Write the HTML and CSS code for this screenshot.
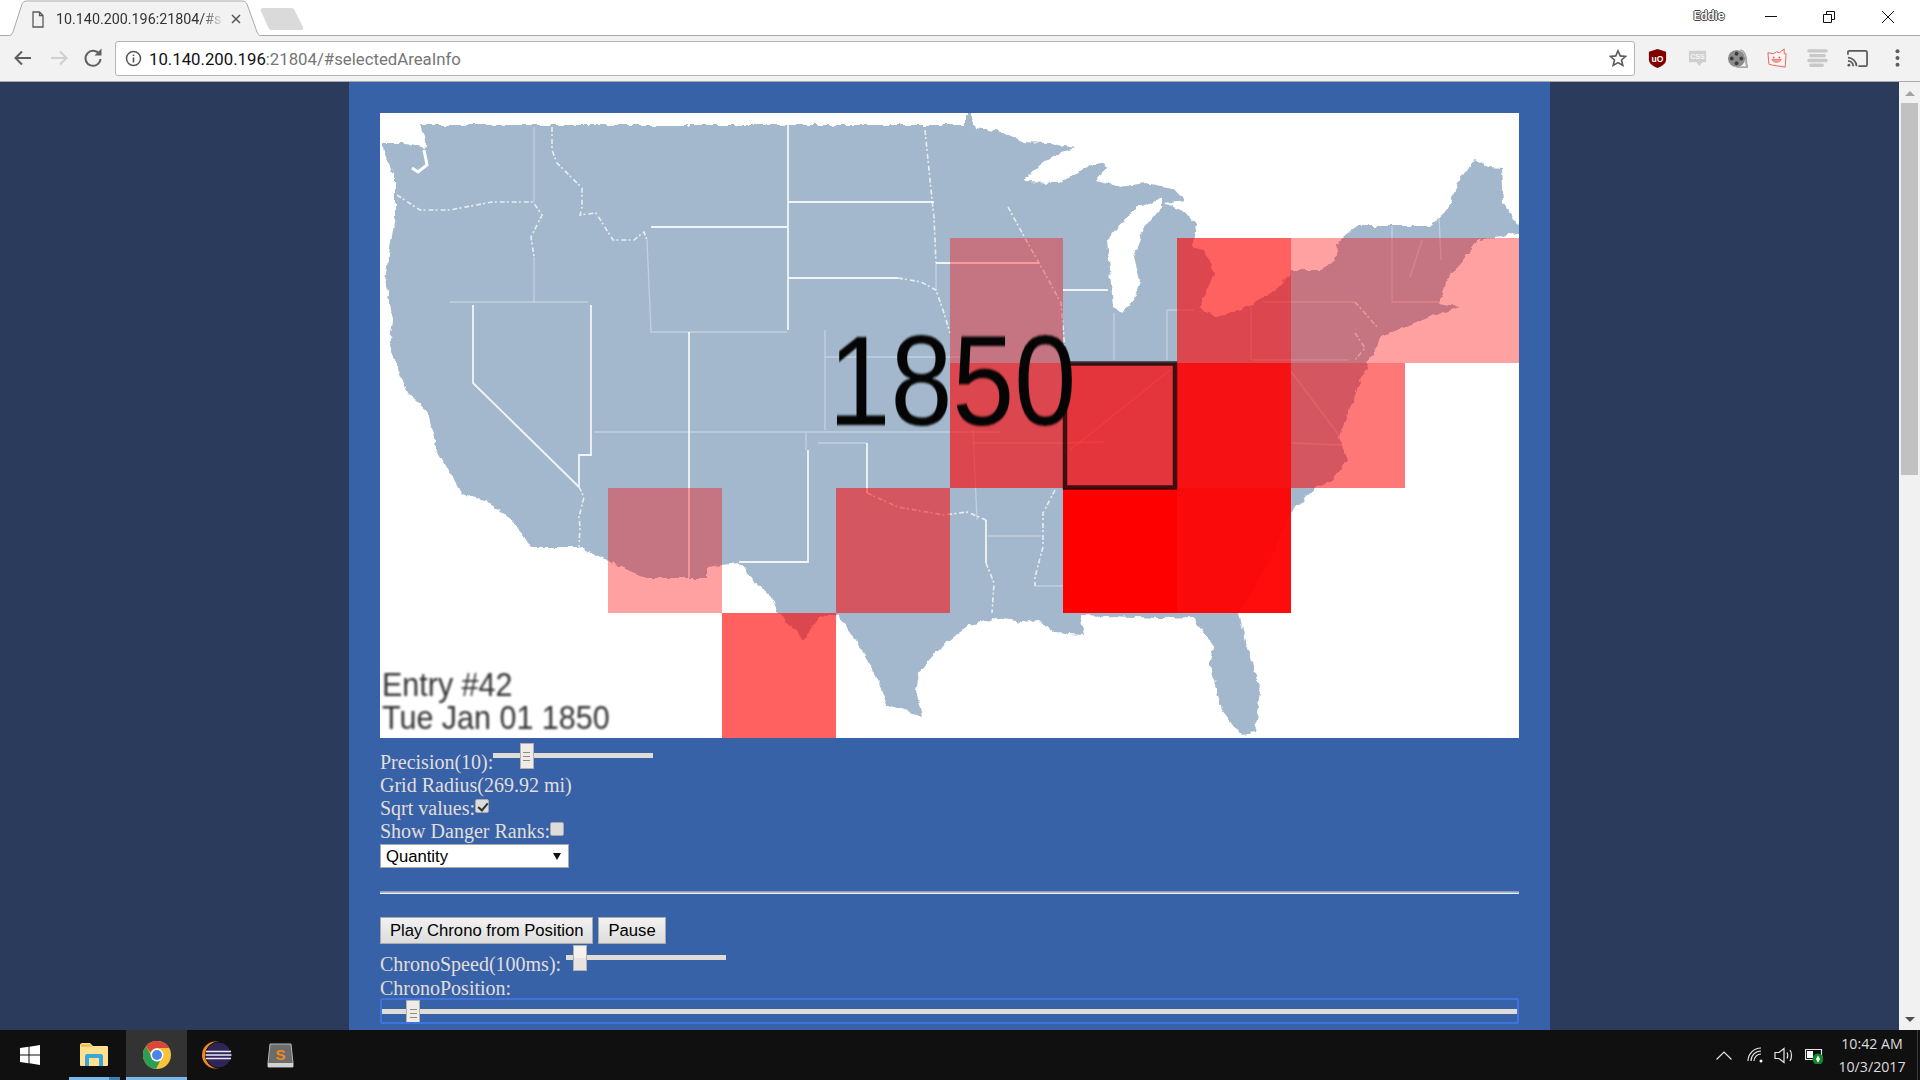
FILE: index.html
```html
<!DOCTYPE html>
<html lang="en">
<head>
<meta charset="utf-8">
<title>10.140.200.196:21804/#selectedAreaInfo</title>
<link rel="stylesheet" href="styles.css">
</head>
<body>
<div class="screen">
  <header class="browser">
    <div class="tabstrip">
      <div class="tab">
        <svg class="tab-shape" viewBox="0 0 258 36"><path class="tab-fill" d="M0 36H2C5 36 6 34 7 32L16 4C17 2 18 1 21 1H236C239 1 240 2 241 4L251 32C252 34 253 36 256 36H258"/></svg>
        <svg class="tab-file" viewBox="0 0 12 17"><path class="ico-line" d="M1 1H7.5L11 4.500V16H1ZM7.500 1V4.500H11"/></svg>
        <span class="tab-title">10.140.200.196:21804/#s</span>
        <svg class="tab-close" viewBox="0 0 10 10"><path class="ico-dark" d="M1 1L9 9M9 1L1 9"/></svg>
      </div>
      <svg class="newtab" viewBox="0 0 44 22"><path class="newtab-fill" d="M3 0H31C33 0 34 1 35 3L43 19C44 21 43 22 41 22H12C10 22 9 21 8 19L1 3C0 1 1 0 3 0Z"/></svg>
      <div class="winctl">
        <span class="user">Eddie</span>
        <svg class="win-btn win-min" viewBox="0 0 12 12"><path class="ico-thin" d="M0 5.500H12"/></svg>
        <svg class="win-btn win-max" viewBox="0 0 12 12"><path class="ico-thin" d="M.5 3.500H8.500V11.500H.5ZM3.500 3.500V.5H11.500V8.500H8.500"/></svg>
        <svg class="win-btn win-cls" viewBox="0 0 12 12"><path class="ico-thin" d="M0 0L12 12M12 0L0 12"/></svg>
      </div>
    </div>
    <div class="toolbar">
      <svg class="nav nav-back" viewBox="0 0 24 24"><path class="nav-line" d="M20 12H5M11 5.500L4.500 12L11 18.500"/></svg>
      <svg class="nav nav-fwd" viewBox="0 0 24 24"><path class="nav-off" d="M4 12H19M13 5.500L19.500 12L13 18.500"/></svg>
      <svg class="nav nav-rel" viewBox="0 0 24 24"><path class="nav-line" d="M18.500 8.500A7.500 7.500 0 1 0 19.500 13"/><path class="nav-fill" d="M13.500 9.500H20.500V2.500Z"/></svg>
      <div class="omnibox">
        <svg class="info" viewBox="0 0 17 17"><circle class="info-ring" cx="8.500" cy="8.500" r="7"/><path class="info-i" d="M8.500 7.500V12.500M8.500 4.500V6"/></svg>
        <span class="url"><b class="url-host">10.140.200.196</b>:21804/#selectedAreaInfo</span>
        <svg class="star" viewBox="0 0 18 18"><path class="star-line" d="M9 1.800L11.200 6.900L16.700 7.400L12.500 11L13.800 16.400L9 13.600L4.200 16.400L5.500 11L1.300 7.400L6.800 6.900Z"/></svg>
      </div>
      <div class="ext">
        <svg viewBox="0 0 20 22"><path class="ub" d="M10 1L19 4V12C19 16 15 19 10 21C5 19 1 16 1 12V4Z"/><text class="ub-t" x="10" y="14.500" text-anchor="middle">uO</text></svg>
      </div>
      <div class="ext">
        <svg viewBox="0 0 20 22"><path class="css-b" d="M1 3H19V15H15L12 19L9 15H1Z"/><text class="css-t" x="10" y="12" text-anchor="middle">CSS</text></svg>
      </div>
      <div class="ext">
        <svg viewBox="0 0 22 22"><circle class="reel" cx="10" cy="11" r="9"/><circle class="reel-h" cx="10" cy="6" r="2"/><circle class="reel-h" cx="10" cy="16" r="2"/><circle class="reel-h" cx="5" cy="11" r="2"/><circle class="reel-h" cx="15" cy="11" r="2"/><path class="reel-t" d="M14 2C18 3 20 8 20 13C20 17 21 19 22 20H10"/></svg>
      </div>
      <div class="ext">
        <svg viewBox="0 0 22 22"><path class="cat" d="M1 5L7 6L10 4L13 5L18 1V6L20 6L19 20L6 18L2 17Z"/><circle class="cat-e" cx="7" cy="10" r="1"/><circle class="cat-e" cx="13" cy="10" r="1"/><path class="cat-m" d="M5 12C7 16 13 16 15 12Z"/></svg>
      </div>
      <div class="ext">
        <svg viewBox="0 0 22 22"><path class="bars" d="M2 3H20M4 8H18M2 13H20M4 18H16"/></svg>
      </div>
      <div class="ext">
        <svg viewBox="0 0 22 18"><path class="cast" d="M1 5V2.500C1 1.500 1.500 1 2.500 1H19.500C20.500 1 21 1.500 21 2.500V15.500C21 16.500 20.500 17 19.500 17H12"/><path class="cast" d="M1 8C5.500 8 10 12 10 17M1 11.500C4 11.500 6.500 14 6.500 17"/><circle class="cast-d" cx="2" cy="16" r="1.500"/></svg>
      </div>
      <div class="ext">
        <svg class="menu" viewBox="0 0 4 18"><circle class="dot" cx="2" cy="3" r="1.800"/><circle class="dot" cx="2" cy="9" r="1.800"/><circle class="dot" cx="2" cy="15" r="1.800"/></svg>
      </div>
    </div>
  </header>

  <div class="viewport">
    <main class="page">
      <div class="panel">
        <svg class="map" viewBox="380 113 1139 625">
          <defs>
            <filter id="rough" x="-2%" y="-2%" width="104%" height="104%">
              <feTurbulence type="fractalNoise" baseFrequency=".14" numOctaves="2" seed="4"/>
              <feDisplacementMap in="SourceGraphic" scale="6" xChannelSelector="R" yChannelSelector="G"/>
            </filter>
          </defs>
          <rect class="sea" x="380" y="113" width="1139" height="625"/>
          <g class="soft">
            <g class="rough">
              <path class="land" d="M381 143L400 143L415 146L426 148L424 135L420 125L965 125L965 113L971 113L975 128L1002 132L1022 142L1047 143L1075 148L1059 153L1039 165L1022 182L1059 183L1075 173L1100 163L1108 167L1096 180L1120 187L1145 183L1173 188L1184 200L1165 203L1186 213L1196 225L1192 247L1204 250L1214 273L1200 307L1214 318L1247 307L1279 288L1291 270L1320 270L1335 260L1339 240L1357 226L1430 226L1447 210L1459 180L1475 159L1488 167L1502 168L1504 203L1518 227L1518 233L1479 240L1447 280L1439 303L1459 307L1430 317L1381 337L1369 360L1357 390L1339 437L1347 460L1332 480L1316 488L1292 510L1270 560L1239 613L1247 647L1261 693L1255 733L1241 735L1222 710L1210 667L1214 647L1192 617L1161 618L1080 615L1084 635L1055 633L1039 620L1022 622L998 618L969 625L941 647L920 670L916 690L922 717L887 705L875 673L856 640L837 615L820 617L804 640L778 613L772 597L753 580L739 563L707 567L707 578L645 578L607 560L579 547L531 547L512 520L485 500L462 495L450 473L437 450L427 410L408 393L389 347L393 320L385 280L395 217L395 180Z"/>
              <path class="lake" d="M1161 198L1136 208L1120 224L1107 240L1110 270L1113 307L1122 313L1134 300L1140 280L1134 257L1143 230L1161 208Z"/>
            </g>
            <path class="inlet" d="M424 150L427 165L418 172L412 168"/>
            <g class="b">
              <path d="M473 305V383L579 487"/>
              <path d="M591 305V455H579V487"/>
              <path d="M651 227H787"/>
              <path d="M689 332V578"/>
              <path d="M788 125V330"/>
              <path d="M788 202H934"/>
              <path d="M788 278H898"/>
              <path d="M936 263H1039"/>
              <path d="M808 450V562H739"/>
              <path d="M867 443V493"/>
              <path d="M1063 290H1108"/>
              <path d="M986 520V563"/>
            </g>
            <g class="f">
              <path d="M450 302H588"/>
              <path d="M534 127V202"/>
              <path d="M534 257V302"/>
              <path d="M647 240L651 332H689H787"/>
              <path d="M825 330V430"/>
              <path d="M825 357H967"/>
              <path d="M594 432H950L1000 432"/>
              <path d="M806 433V450"/>
              <path d="M818 443H867"/>
              <path d="M973 430L977 520"/>
              <path d="M973 443H1059L1104 442"/>
              <path d="M1114 313V360"/>
              <path d="M1167 360V310H1194"/>
              <path d="M1251 305V360"/>
              <path d="M1263 302H1355"/>
              <path d="M1251 360H1349"/>
              <path d="M1392 226V302H1439"/>
              <path d="M1422 240L1410 277"/>
              <path d="M1439 217L1441 260"/>
              <path d="M1292 443L1341 445"/>
              <path d="M988 536H1041"/>
              <path d="M1035 586H1063"/>
              <path d="M936 263V290"/>
              <path d="M1290 370L1350 450M1170 370L1070 450"/>
            </g>
            <g class="d">
              <path d="M397 195L420 210L450 210L492 202L533 202L542 215L531 237L534 257"/>
              <path d="M552 127V150L557 163L582 188V207L580 215L596 213L613 240H634L644 232L647 240"/>
              <path d="M579 487L584 497L579 517L580 527L579 547"/>
              <path d="M898 278L921 282L936 290L944 313L950 333"/>
              <path d="M925 130L932 200L934 217L936 263"/>
              <path d="M867 493L898 507L944 515L967 512L986 520"/>
              <path d="M986 563L994 583L992 613"/>
              <path d="M1055 490L1043 513V547L1035 577V586"/>
              <path d="M1008 207L1026 240L1043 270L1061 303L1065 350"/>
              <path d="M1355 302L1377 327M1355 333L1365 348L1355 360"/>
            </g>
            <rect class="a37" x="608" y="488" width="114" height="125"/>
            <rect class="a62" x="722" y="613" width="114" height="125"/>
            <rect class="a53" x="836" y="488" width="114" height="125"/>
            <rect class="a37" x="950" y="238" width="113" height="125"/>
            <rect class="a62" x="950" y="363" width="113" height="125"/>
            <rect class="a71" x="1063" y="363" width="114" height="125"/>
            <rect class="a100" x="1063" y="488" width="114" height="125"/>
            <rect class="a62" x="1177" y="238" width="114" height="125"/>
            <rect class="a90" x="1177" y="363" width="114" height="125"/>
            <rect class="a95" x="1177" y="488" width="114" height="125"/>
            <rect class="a37" x="1291" y="238" width="114" height="125"/>
            <rect class="a53" x="1291" y="363" width="114" height="125"/>
            <rect class="a37" x="1405" y="238" width="114" height="125"/>
            <rect class="sel" x="1065" y="363.500" width="110" height="124"/>
          </g>
          <text class="year" transform="translate(828.500 425) scale(.87 1)">1850</text>
          <text class="entry" transform="translate(382 696) scale(.91 1)">Entry #42</text>
          <text class="entry" transform="translate(382 729) scale(.91 1)">Tue Jan 01 1850</text>
        </svg>

        <div class="controls">
          <div class="row"><span>Precision(10):</span><input class="range range-short" type="range" min="0" max="100" value="18"></div>
          <div class="row"><span>Grid Radius(269.92 mi)</span></div>
          <div class="row"><span>Sqrt values:</span><input class="check" type="checkbox" checked></div>
          <div class="row"><span>Show Danger Ranks:</span><input class="check" type="checkbox"></div>
          <div class="select-wrap"><select class="select"><option>Quantity</option></select></div>
          <hr class="rule">
          <div class="buttons"><button class="btn">Play Chrono from Position</button><button class="btn">Pause</button></div>
          <div class="row row-speed"><span>ChronoSpeed(100ms):</span><input class="range range-short range-plain" type="range" min="0" max="100" value="5"></div>
          <div class="row"><span>ChronoPosition:</span></div>
          <input class="range range-full" type="range" min="0" max="100" step="any" value="2.350">
        </div>
      </div>
    </main>
    <aside class="scrollbar">
      <span class="arrow-up"></span>
      <span class="thumb"></span>
      <span class="spacer"></span>
      <span class="arrow-down"></span>
    </aside>
  </div>

  <footer class="taskbar">
    <div class="task task-start">
      <svg class="win-logo" viewBox="0 0 20 20"><path class="white" d="M0 3L8.500 1.800V9.500H0ZM9.500 1.700L20 0V9.500H9.500ZM0 10.500H8.500V18.200L0 17ZM9.500 10.500H20V20L9.500 18.300Z"/></svg>
    </div>
    <div class="task task-files">
      <svg class="i-folder" viewBox="0 0 28 23"><path class="fold-b" d="M0 2C0 1 1 0 2 0H10L13 3H27C27.500 3 28 3.500 28 4V22C28 22.500 27.500 23 27 23H1C.5 23 0 22.500 0 22Z"/><path class="fold-t" d="M1 1H10L12 4H1Z"/><path class="fold-h" d="M5 23V13C5 12 6 11 7 11H21C22 11 23 12 23 13V23H19V15H9V23Z"/></svg>
    </div>
    <div class="task task-chrome">
      <svg class="i-chrome" viewBox="0 0 28 28"><circle class="c-y" cx="14" cy="14" r="14"/><path class="c-r" d="M14 0A14 14 0 0 1 26.100 7H14A7 7 0 0 0 7.500 11.500L2.900 5.500A14 14 0 0 1 14 0Z"/><path class="c-g" d="M2.900 5.500L8 14A7 7 0 0 0 17 20L13 28A14 14 0 0 1 2.900 5.500Z"/><circle class="c-w" cx="14" cy="14" r="6.500"/><circle class="c-bl" cx="14" cy="14" r="5"/></svg>
    </div>
    <div class="task task-eclipse">
      <svg class="i-eclipse" viewBox="0 0 30 28"><circle class="e-o" cx="13.500" cy="14" r="13.500"/><circle class="e-p" cx="16.500" cy="14" r="13"/><path class="e-s" d="M4 10.500H29M3.500 14H29.500M4 17.500H29"/></svg>
    </div>
    <div class="task task-sublime">
      <svg class="i-sublime" viewBox="0 0 27 25"><path class="s-b" d="M3 1H24L26 20V24H1V20Z"/><path class="s-l" d="M1 20H26V24H1Z"/><text class="s-t" x="13.500" y="16.500" text-anchor="middle">S</text></svg>
    </div>
    <div class="tray">
      <svg class="t-caret" viewBox="0 0 16 9"><path class="t-line" d="M.5 8.500L8 1L15.500 8.500"/></svg>
      <svg class="t-wifi" viewBox="0 0 16 16"><path class="t-line" d="M1 14A13 13 0 0 1 14 1M4 14A10 10 0 0 1 14 4M7 14A7 7 0 0 1 14 7"/><circle class="white" cx="14" cy="14" r="1.500"/></svg>
      <svg class="t-vol" viewBox="0 0 20 17"><path class="t-line" d="M1 5.500H5L10 1.500V15.500L5 11.500H1Z"/><path class="t-line" d="M13 5.500C14 7 14 10 13 11.500M16 3C18 6 18 11 16 14"/></svg>
      <svg class="t-batt" viewBox="0 0 18 16"><path class="t-line" d="M.5 1.500H16.500V11.500H.5Z"/><path class="white" d="M2 3H8V10H2Z"/><circle class="t-green" cx="13" cy="11" r="5.500"/><path class="white" d="M13 7.500L15 11L13.500 14H12.500L11 11Z"/></svg>
      <div class="clock"><span>10:42 AM</span><span>10/3/2017</span></div>
      <span class="desk"></span>
    </div>
  </footer>
</div>
</body>
</html>
```
FILE: styles.css
```css
* { box-sizing: border-box; }
html, body { margin: 0; height: 100%; overflow: hidden; }
body { font-family: "Liberation Sans", Arial, sans-serif; background: #101010; }
.screen { display: flex; flex-direction: column; width: 1920px; height: 1080px; }

/* browser chrome */
.browser { flex: none; height: 82px; background: #fff; font-family: Roboto, "Liberation Sans", sans-serif; }
.tabstrip { display: flex; height: 36px; border-bottom: 1px solid #a9a9a9; align-items: flex-start; position: relative; }
.tab { position: relative; width: 258px; height: 36px; margin-left: 6px; flex: none; }
.tab-shape { position: absolute; left: 0; top: 0; width: 258px; height: 36px; }
.tab-fill { fill: #f2f2f2; stroke: #a9a9a9; stroke-width: 1; }
.tab-file { position: absolute; left: 26px; top: 11px; width: 12px; height: 17px; }
.ico-line { fill: none; stroke: #5a5a5a; stroke-width: 1.300; }
.ico-dark { fill: none; stroke: #555; stroke-width: 1.500; }
.tab-title { position: absolute; left: 50px; top: 10px; font-size: 14.300px; line-height: 18px; color: #333; white-space: nowrap;
  -webkit-mask-image: linear-gradient(90deg, #000 88%, transparent 102%); mask-image: linear-gradient(90deg, #000 88%, transparent 102%); }
.tab-close { position: absolute; left: 225px; top: 14px; width: 10px; height: 10px; }
.newtab { flex: none; width: 44px; height: 22px; margin: 8px 0 0 -4px; }
.newtab-fill { fill: #dadada; }
.winctl { margin-left: auto; display: flex; align-items: center; height: 33px; }
.user { width: 60px; margin-right: 26px; text-align: center; font-size: 12.500px; font-weight: 500; color: #fff; position: relative; top: -1px;
  text-shadow: -1px 0 #444, 1px 0 #444, 0 -1px #444, 0 1px #444; }
.win-btn { width: 12px; height: 12px; flex: none; }
.win-min { margin-right: 46px; }
.win-max { margin-right: 47px; }
.win-cls { margin-right: 26px; }
.ico-thin { fill: none; stroke: #111; stroke-width: 1; }

.toolbar { display: flex; align-items: center; height: 46px; background: #f2f2f2; border-bottom: 1px solid #a9a9a9; padding: 0 3px 1px 11px; }
.nav { flex: none; width: 24px; height: 24px; }
.nav-fwd { margin-left: 12px; }
.nav-rel { margin-left: 10px; }
.nav-line { fill: none; stroke: #5f5f5f; stroke-width: 2; }
.nav-off { fill: none; stroke: #cfcfcf; stroke-width: 2; }
.nav-fill { fill: #5f5f5f; }
.omnibox { flex: none; display: flex; align-items: center; width: 1520px; height: 35px; margin: 0 2px 0 10px; padding: 0 7px 0 9px; background: #fff; border: 1px solid #b4b4b4; border-radius: 3px; }
.info { flex: none; width: 17px; height: 17px; margin-right: 7px; }
.info-ring { fill: none; stroke: #555; stroke-width: 1.500; }
.info-i { fill: none; stroke: #555; stroke-width: 1.600; }
.url { font-size: 16.750px; color: #767676; white-space: nowrap; position: relative; top: 1px; }
.url-host { font-weight: 400; color: #111; }
.star { flex: none; width: 18px; height: 18px; margin-left: auto; }
.star-line { fill: none; stroke: #5a5a5a; stroke-width: 1.600; }
.ext { flex: none; width: 40px; display: flex; justify-content: center; align-items: center; }
.ext svg { width: 21px; height: 21px; }
.ub { fill: #800000; }
.ub-t { font: 700 9px "Liberation Sans", sans-serif; fill: #fff; }
.css-b { fill: #cfcfcf; }
.css-t { font: 700 7.500px "Liberation Sans", sans-serif; fill: #f6f6f6; }
.reel { fill: #8c8c8c; }
.reel-h { fill: #3c3c3c; }
.reel-t { fill: none; stroke: #a8a8a8; stroke-width: 2; }
.cat { fill: #fff4f2; stroke: #e8625c; stroke-width: 1; }
.cat-e { fill: #e8625c; }
.cat-m { fill: #f0a09a; stroke: #e8625c; stroke-width: .7; }
.bars { fill: none; stroke: #c8c8c8; stroke-width: 3.600; stroke-linecap: round; }
.cast { fill: none; stroke: #5a5a5a; stroke-width: 1.800; }
.cast-d { fill: #5a5a5a; }
.dot { fill: #5f5f5f; }
.ext .menu { width: 5px; height: 20px; }

/* page */
.viewport { flex: none; display: flex; height: 948px; overflow: hidden; }
.page { flex: 1; min-width: 0; background: #2a3b5b; overflow: hidden; }
.panel { width: 1201px; min-height: 1200px; margin: 0 auto; padding: 31px 31px 0; background: #3762a8; color: #e2deda; font-family: "Liberation Serif", "Times New Roman", serif; font-size: 20px; }
.map { display: block; width: 1139px; height: 625px; }
.sea { fill: #fff; }
.land { fill: #a3b8cd; }
.lake { fill: #fff; }
.inlet { fill: none; stroke: #fff; stroke-width: 3; }
.rough { filter: url(#rough); }
.soft { filter: blur(.6px); }
.b path, .f path, .d path { fill: none; stroke: #fff; }
.b path { stroke-width: 1.800; stroke-opacity: .85; }
.f path { stroke-width: 1.300; stroke-opacity: .35; }
.d path { stroke-width: 1.600; stroke-opacity: .75; stroke-dasharray: 5 2 2 3; }
.a37 { fill: rgba(255, 0, 0, .37); }
.a53 { fill: rgba(255, 0, 0, .53); }
.a62 { fill: rgba(255, 0, 0, .62); }
.a71 { fill: rgba(255, 0, 0, .71); }
.a90 { fill: rgba(255, 0, 0, .9); }
.a95 { fill: rgba(255, 0, 0, .95); }
.a100 { fill: #f00; }
.sel { fill: none; stroke: rgba(0, 0, 0, .72); stroke-width: 4.500; }
.year { font: 128px "Liberation Sans", sans-serif; fill: #050505; filter: blur(.8px); }
.entry { font: 33.500px "Liberation Sans", sans-serif; fill: #333; filter: blur(1.100px); }

.controls { padding-top: 13px; }
.row { display: flex; align-items: flex-start; height: 23px; line-height: 23px; white-space: nowrap; }
.range { -webkit-appearance: none; appearance: none; display: block; margin: 0; padding: 0; background: transparent; height: 26px; }
.range-short { flex: none; width: 160px; margin-top: -9px; }
.range::-webkit-slider-runnable-track { height: 5px; background: #e0dcd8; }
.range::-webkit-slider-thumb { -webkit-appearance: none; appearance: none; width: 14px; height: 26px; margin-top: -10px; border: 1px solid #b4b0ac; background-color: #efebe7;
  background-image: linear-gradient(#8e8a86, #8e8a86), linear-gradient(#8e8a86, #8e8a86), linear-gradient(#8e8a86, #8e8a86);
  background-size: 7px 1px; background-repeat: no-repeat; background-position: center 8px, center 12px, center 16px; }
.range-plain::-webkit-slider-thumb { background-image: linear-gradient(#f4f1ee 50%, #e8e3de 50%); background-size: 100% 100%; background-position: 0 0; }
.row-speed { height: 24px; }
.row-speed .range { margin-left: 5px; margin-top: -9px; }
.range-full { width: 100%; height: 26px; margin-top: -2px; outline: 2px solid #4173dc; outline-offset: -2px; border-radius: 2px; }
.range-full::-webkit-slider-thumb { height: 24px; margin-top: -9px; }
.check { -webkit-appearance: none; appearance: none; position: relative; flex: none; width: 14px; height: 14px; margin: 2px 0 0 0; background: #dcdcdc; border: 1px solid #a8a8a8; border-radius: 2px; }
.check:checked::after { content: ""; position: absolute; left: 4px; top: 1px; width: 4px; height: 8px; border: solid #333; border-width: 0 2px 2px 0; transform: rotate(40deg); }
.select-wrap { position: relative; width: 189px; height: 24px; margin-top: 1px; }
.select-wrap::after { content: ""; position: absolute; left: 173px; top: 9px; border: solid transparent; border-width: 7px 4px 0; border-top-color: #111; }
.select { -webkit-appearance: none; appearance: none; display: block; width: 189px; height: 24px; padding: 0 0 0 5px; border: 1px solid #a9a9a9; border-radius: 0; background: #fff; color: #000; font: 16.670px "Liberation Sans", sans-serif; }
.rule { height: 3px; margin: 23px 0; border: 0; border-top: 1px solid #8e9fbb; border-bottom: 1px solid #eef1f6; background: #a6b4cd; }
.buttons { display: flex; gap: 5px; height: 27px; margin-bottom: 9px; }
.btn { height: 27px; padding: 0 9px; border: 1px solid #a9a9a9; border-radius: 0; background: linear-gradient(#f2f2f2, #dcdcdc); color: #000; font: 16.670px "Liberation Sans", sans-serif; }

/* scrollbar */
.scrollbar { flex: none; width: 21px; display: flex; flex-direction: column; align-items: center; background: #f1f1f1; }
.arrow-up { margin-top: 9px; border: solid transparent; border-width: 0 5px 5px; border-bottom-color: #a3a3a3; }
.thumb { width: 17px; height: 372px; margin-top: 7px; background: #c1c1c1; }
.spacer { flex: 1; }
.arrow-down { margin-bottom: 8px; border: solid transparent; border-width: 5px 5px 0; border-top-color: #505050; }

/* taskbar */
.taskbar { flex: none; display: flex; height: 50px; background: #101010; }
.task { flex: none; display: flex; align-items: center; justify-content: center; height: 50px; position: relative; }
.task-start { width: 60px; }
.win-logo { width: 20px; height: 20px; }
.white { fill: #fff; }
.task-files { width: 51px; margin-left: 9px; }
.task-files::after { content: ""; position: absolute; left: 0; right: 0; bottom: 0; height: 3px; background: linear-gradient(90deg, #76b9ed 40px, #3f7fb5 40px); }
.i-folder { width: 28px; height: 23px; position: relative; top: -1px; left: -1px; }
.fold-b { fill: #ffe18f; }
.fold-t { fill: #f0c25a; }
.fold-h { fill: #3aa6dd; }
.task-chrome { width: 61px; margin-left: 6px; background: #333; }
.task-chrome::after { content: ""; position: absolute; left: 0; right: 0; bottom: 0; height: 3px; background: #76b9ed; }
.i-chrome { width: 28px; height: 28px; }
.c-y { fill: #f5c33c; }
.c-r { fill: #d9463a; }
.c-g { fill: #2f9e55; }
.c-w { fill: #fff; }
.c-bl { fill: #4a85ee; }
.task-eclipse { width: 60px; }
.i-eclipse { width: 30px; height: 28px; }
.e-o { fill: #f08a1d; }
.e-p { fill: #2e2458; stroke: #101010; stroke-width: 1; }
.e-s { fill: none; stroke: #ece9f6; stroke-width: 1.600; }
.task-sublime { width: 50px; margin-left: 8px; }
.i-sublime { width: 27px; height: 25px; }
.s-b { fill: #6c6c6c; stroke: #b8b8b8; stroke-width: 1; }
.s-l { fill: #d2d2d2; }
.s-t { font: 700 15px "Liberation Sans", sans-serif; fill: #f08a1d; }
.tray { display: flex; align-items: center; margin-left: auto; height: 50px; color: #dcdcdc; font-family: "Open Sans", "Noto Sans", sans-serif; }
.t-line { fill: none; stroke: #e6e6e6; stroke-width: 1.200; }
.t-caret { width: 16px; height: 9px; margin-right: 15px; }
.t-wifi { width: 16px; height: 16px; margin-right: 11px; }
.t-vol { width: 20px; height: 17px; margin-right: 11px; }
.t-batt { width: 18px; height: 16px; margin-right: 14px; position: relative; top: 1px; }
.t-green { fill: #108a2e; }
.clock { display: flex; flex-direction: column; align-items: center; width: 70px; font-size: 14.200px; line-height: 23px; }
.desk { width: 1px; height: 50px; margin-left: 10px; margin-right: 2px; background: #3a3a3a; }
```
